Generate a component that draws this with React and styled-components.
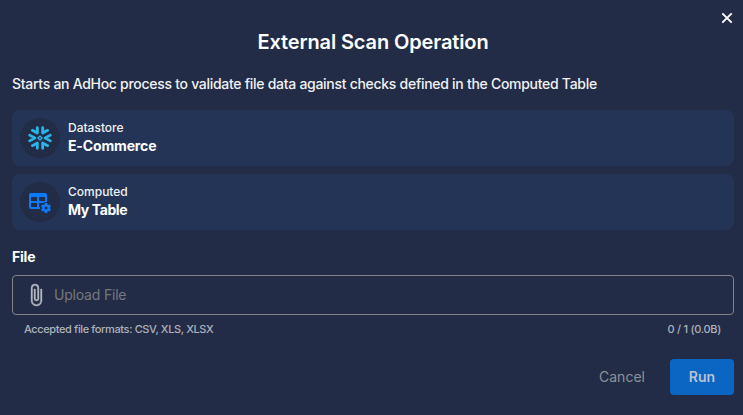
import React from 'react';
import styled, { createGlobalStyle } from 'styled-components';

const GlobalStyle = createGlobalStyle`
  * { box-sizing: border-box; }
  body { margin: 0; background: #222c46; }
`;

const Dialog = styled.main`
  display: flex;
  flex-direction: column;
  width: 743px;
  height: 415px;
  padding: 10px 9px 20px 12px;
  background: #222c46;
  color: #fff;
  font-family: Inter, sans-serif;
  font-size: 14px;
  line-height: 20px;
  white-space: nowrap;
`;

const CloseButton = styled.button`
  align-self: flex-end;
  display: flex;
  width: 16px;
  height: 16px;
  margin-right: -1px;
  padding: 0;
  border: 0;
  background: none;
  color: #fff;
`;

const Title = styled.h1`
  margin: 2px 0 0;
  font-size: 20px;
  font-weight: 600;
  letter-spacing: -0.12px;
  line-height: 28px;
  text-align: center;
`;

const Description = styled.p`
  margin: 18px 0 16px;
  color: #f0f1f4;
  font-weight: 500;
  letter-spacing: -0.285px;
`;

const CardList = styled.div`
  display: grid;
  gap: 8px;
`;

const Card = styled.section`
  display: flex;
  align-items: center;
  gap: 8px;
  height: 56px;
  padding: 0 8px;
  border-radius: 8px;
  background: #243456;
`;

const IconCircle = styled.div`
  display: flex;
  align-items: center;
  justify-content: center;
  width: 40px;
  height: 40px;
  border-radius: 50%;
  background: #222c46;
`;

const CardText = styled.div`
  display: flex;
  flex-direction: column;
  padding-bottom: 2px;
  line-height: 18px;
`;

const CardLabel = styled.span`
  color: #f0f1f4;
  font-size: 12px;
  font-weight: 500;
`;

const CardName = styled.strong`
  font-weight: 700;
  letter-spacing: ${({ $tracking }) => $tracking};
`;

const FieldLabel = styled.label`
  margin: 17px 0 8px;
  font-weight: 700;
  letter-spacing: -0.2px;
`;

const FileField = styled.div`
  display: flex;
  align-items: center;
  gap: 6px;
  height: 40px;
  padding-left: 11px;
  border: 1px solid #828385;
  border-radius: 4px;
  color: #76787d;
  letter-spacing: -0.2px;
`;

const FieldDetails = styled.div`
  display: flex;
  justify-content: space-between;
  margin-top: 6px;
  padding: 0 13px 0 12px;
  color: #aeb2bc;
  font-size: 11px;
  font-weight: 500;
  line-height: 16px;
  letter-spacing: -0.38px;
`;

const Counter = styled.span`
  letter-spacing: -0.28px;
`;

const Actions = styled.footer`
  display: flex;
  justify-content: flex-end;
  gap: 9px;
  margin-top: auto;
`;

const ActionButton = styled.button`
  height: 36px;
  padding: 0 0 2px;
  width: ${({ $primary }) => ($primary ? '64px' : '78px')};
  border: 0;
  border-radius: 4px;
  background: ${({ $primary }) => ($primary ? '#0b65c2' : 'transparent')};
  color: ${({ $primary }) => ($primary ? '#b9c3d4' : '#8f9299')};
  font: ${({ $primary }) => ($primary ? 600 : 400)} 14px Inter, sans-serif;
`;

const ARM_PAIRS = 'M-13 -50V-24L-37 -37M13 -50V-24L37 -37M-13 50V24L-37 37M13 50V24L37 37M-50 -14L-25 0L-50 14M50 -14L25 0L50 14';

const SnowflakeIcon = () => (
  <svg width="24" height="24" viewBox="-58 -58 116 116" fill="none" stroke="#29b5e8" strokeLinecap="round" strokeLinejoin="round">
    <path d={ARM_PAIRS} strokeWidth="13.5" />
    <path d="M0 -10L10 0L0 10L-10 0Z" strokeWidth="6.5" />
  </svg>
);

const TableCogIcon = () => (
  <svg width="24" height="24" viewBox="0 0 24 24" fill="#0a7cff">
    <path fillRule="evenodd" d="M3 3H17A2 2 0 0 1 19 5V12.1C17.3 11.8 16 12.2 14.7 13H11V17H12.1C12 17.7 12 18.3 12.1 19H3A2 2 0 0 1 1 17V5A2 2 0 0 1 3 3ZM3 7V11H9V7ZM11 7V11H17V7ZM3 13V17H9V13Z" />
    <path d="M22.78 19.32L21.71 18.5C21.73 18.33 21.75 18.17 21.75 18S21.74 17.67 21.71 17.5L22.77 16.68C22.86 16.6 22.89 16.47 22.83 16.36L21.83 14.63C21.77 14.5 21.64 14.5 21.5 14.5L20.28 15C20 14.82 19.74 14.65 19.43 14.53L19.24 13.21C19.23 13.09 19.12 13 19 13H17C16.88 13 16.77 13.09 16.75 13.21L16.56 14.53C16.26 14.66 15.97 14.82 15.71 15L14.47 14.5C14.36 14.5 14.23 14.5 14.16 14.63L13.16 16.36C13.1 16.47 13.12 16.6 13.22 16.68L14.28 17.5C14.26 17.67 14.25 17.83 14.25 18S14.26 18.33 14.28 18.5L13.22 19.32C13.13 19.4 13.1 19.53 13.16 19.64L14.16 21.37C14.22 21.5 14.35 21.5 14.47 21.5L15.71 21C15.97 21.18 16.25 21.35 16.56 21.47L16.75 22.79C16.77 22.91 16.87 23 17 23H19C19.12 23 19.23 22.91 19.25 22.79L19.44 21.47C19.74 21.34 20 21.18 20.28 21L21.5 21.5C21.64 21.5 21.77 21.5 21.84 21.37L22.84 19.64C22.9 19.53 22.87 19.4 22.78 19.32M18 19.5C17.17 19.5 16.5 18.83 16.5 18S17.18 16.5 18 16.5 19.5 17.17 19.5 18 18.84 19.5 18 19.5Z" />
  </svg>
);

const PaperclipIcon = () => (
  <svg width="24" height="24" viewBox="0 0 24 24" fill="#b3b7c0" stroke="#b3b7c0" strokeWidth="0.35">
    <path d="M16.5,6V17.5A4,4 0 0,1 12.5,21.5A4,4 0 0,1 8.5,17.5V5A2.5,2.5 0 0,1 11,2.5A2.5,2.5 0 0,1 13.5,5V15.5A1,1 0 0,1 12.5,16.5A1,1 0 0,1 11.5,15.5V6H10V15.5A2.5,2.5 0 0,0 12.5,18A2.5,2.5 0 0,0 15,15.5V5A4,4 0 0,0 11,1A4,4 0 0,0 7,5V17.5A5.5,5.5 0 0,0 12.5,23A5.5,5.5 0 0,0 18,17.5V6H16.5Z" />
  </svg>
);

const CloseIcon = () => (
  <svg width="16" height="16" viewBox="0 0 16 16" stroke="currentColor" strokeWidth="1.9">
    <path d="M3.3 3.3L12.7 12.7M12.7 3.3L3.3 12.7" />
  </svg>
);

const SOURCES = [
  { label: 'Datastore', name: 'E-Commerce', tracking: '-0.15px', Icon: SnowflakeIcon },
  { label: 'Computed', name: 'My Table', tracking: '-0.4px', Icon: TableCogIcon },
];

export default function App() {
  return (
    <>
      <GlobalStyle />
      <Dialog>
        <CloseButton aria-label="Close"><CloseIcon /></CloseButton>
        <Title>External Scan Operation</Title>
        <Description>
          Starts an AdHoc process to validate file data against checks defined in the Computed Table
        </Description>
        <CardList>
          {SOURCES.map(({ label, name, tracking, Icon }) => (
            <Card key={label}>
              <IconCircle><Icon /></IconCircle>
              <CardText>
                <CardLabel>{label}</CardLabel>
                <CardName $tracking={tracking}>{name}</CardName>
              </CardText>
            </Card>
          ))}
        </CardList>
        <FieldLabel>File</FieldLabel>
        <FileField><PaperclipIcon />Upload File</FileField>
        <FieldDetails>
          <span>Accepted file formats: CSV, XLS, XLSX</span>
          <Counter>0 / 1 (0.0B)</Counter>
        </FieldDetails>
        <Actions>
          <ActionButton>Cancel</ActionButton>
          <ActionButton $primary>Run</ActionButton>
        </Actions>
      </Dialog>
    </>
  );
}
